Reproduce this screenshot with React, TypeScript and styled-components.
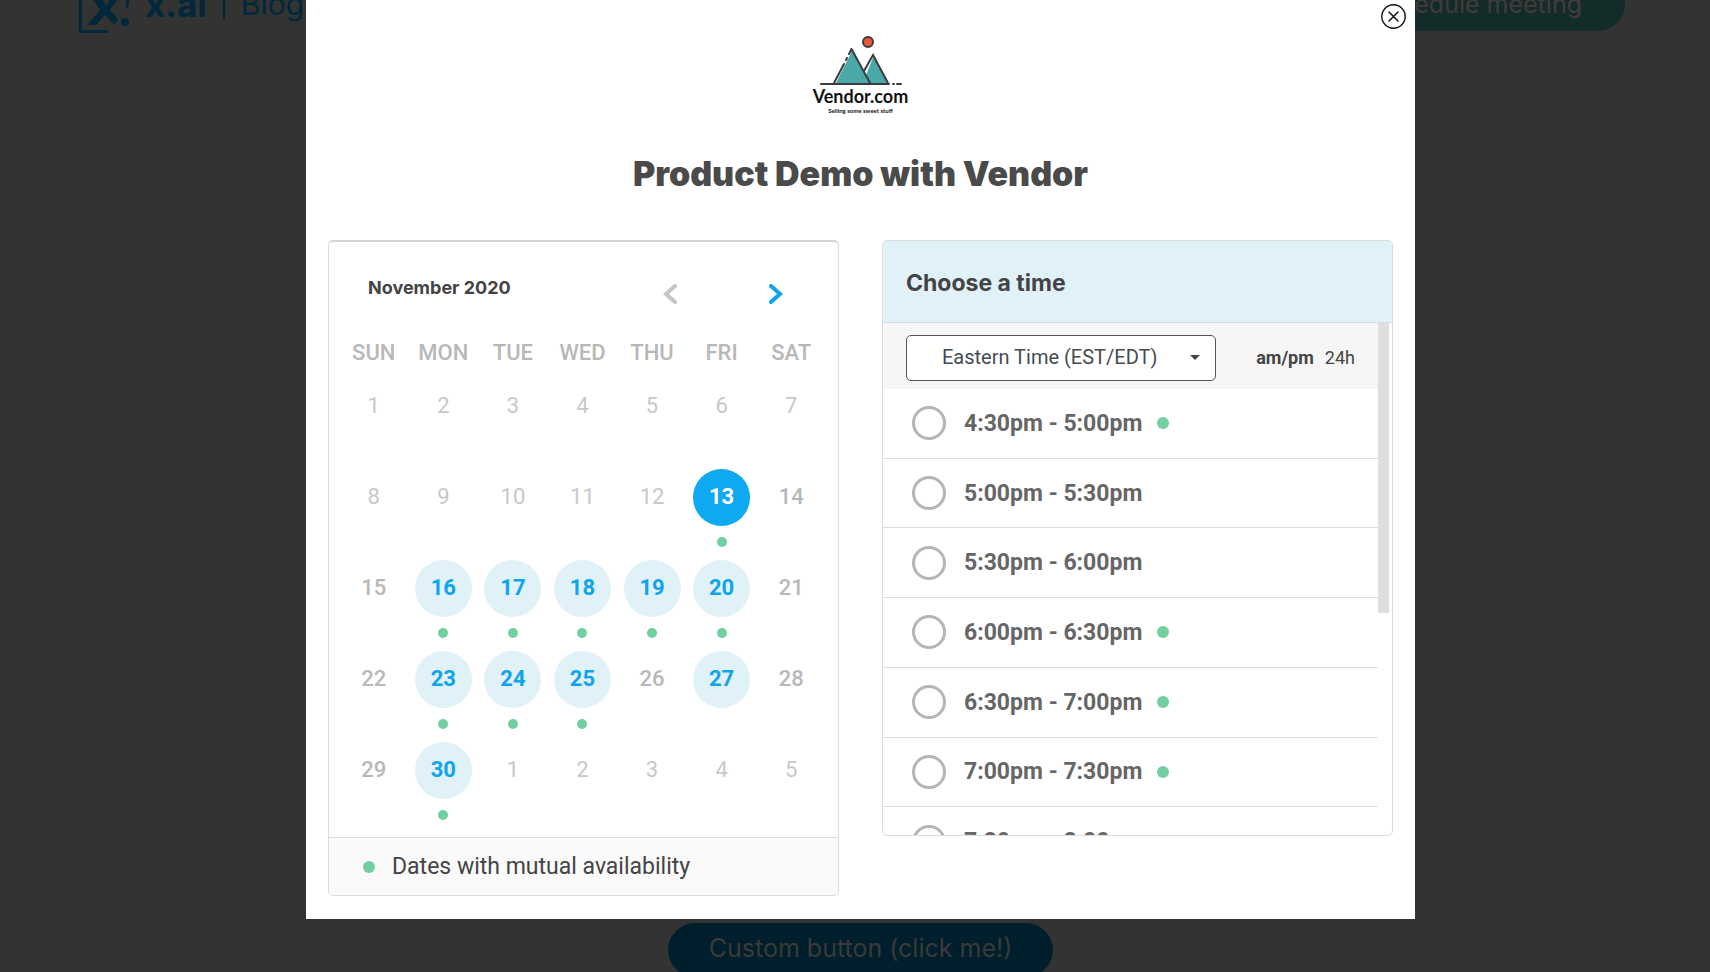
import React, { useState } from "react";
import styled, { createGlobalStyle, css } from "styled-components";

const inter = `Inter, "Liberation Sans", sans-serif`;
const roboto = `Roboto, "Liberation Sans", sans-serif`;

const GlobalStyle = createGlobalStyle`
  *, *::before, *::after { box-sizing: border-box; }
  body { margin: 0; background: #333; overflow: hidden; font-family: ${roboto}; }
  button { font: inherit; border: 0; padding: 0; background: none; cursor: pointer; }
`;

/* Dimmed page behind the dialog */
const Page = styled.div`
  display: flex;
  flex-direction: column;
  height: 100vh;
  overflow: hidden;
  padding-left: 11px;
`;
const SiteHeader = styled.header`
  display: flex;
  align-items: center;
  height: 108px;
  flex: none;
  margin-top: -50px;
  padding: 0 85px 0 68px;
  font-family: ${inter};
  color: #00283a;
`;
const Brand = styled.a`
  display: flex;
  align-items: center;
  gap: 14px;
  color: inherit;
  text-decoration: none;
  font-size: 35px;
  font-weight: 700;
`;
const HeaderLink = styled.a`
  margin-left: 16px;
  padding-left: 16px;
  border-left: 2px solid #00283a;
  color: inherit;
  text-decoration: none;
  font-size: 30px;
  line-height: 32px;
`;
const PillButton = styled.button<{ $tone: "teal" | "blue" }>`
  height: 54px;
  flex: none;
  border-radius: 27px;
  font-family: ${inter};
  font-size: 25px;
  white-space: nowrap;
  ${(p) =>
    p.$tone === "teal"
      ? css`background: #132b29; color: #433b3b; margin-left: auto; padding: 0 43px;`
      : css`background: #001f2d; color: #3d3937; margin: auto auto -5px; padding: 0 41px 4px;`}
`;

/* Dialog */
const Backdrop = styled.div`
  position: fixed;
  inset: 0;
  display: flex;
  justify-content: center;
  align-items: flex-start;
  padding-left: 11px;
`;
const Dialog = styled.section`
  position: relative;
  width: 100%;
  max-width: 1109px;
  padding: 35px 22px 23px;
  background: #fff;
`;
const CloseButton = styled.button`
  position: absolute;
  top: 4px;
  right: 9px;
  width: 25px;
  height: 25px;
  svg { display: block; }
`;
const VendorLogo = styled.div`
  display: flex;
  flex-direction: column;
  align-items: center;
  gap: 1px;
  color: #111;
  font-family: Lato, "Liberation Sans", sans-serif;
  font-weight: 700;
`;
const VendorName = styled.span`
  font-size: 18px;
  line-height: 20px;
`;
const VendorTagline = styled.span`
  font-size: 6px;
  line-height: 8px;
`;
const Title = styled.h1`
  margin: 35px 0 42px;
  color: #4a4a4a;
  font-family: ${inter};
  font-size: 34px;
  font-weight: 900;
  line-height: 48px;
  text-align: center;
`;
const Columns = styled.div`
  display: grid;
  grid-template-columns: 1fr 1fr;
  gap: 43px;
  align-items: start;
`;
const Card = styled.section`
  border: 1px solid #dcdcdc;
  border-radius: 5px;
  overflow: hidden;
`;

/* Calendar */
const CalendarCard = styled(Card)`
  border-top: 2px solid #d4d4d4;
`;
const MonthBar = styled.header`
  display: flex;
  align-items: center;
  height: 86px;
  padding: 17px 44px 0 39px;
`;
const Month = styled.h2`
  flex: 1;
  margin: 0;
  padding-bottom: 13px;
  color: #444;
  font-family: ${inter};
  font-size: 18px;
  font-weight: 700;
`;
const MonthButton = styled.button<{ $active?: boolean }>`
  display: grid;
  place-items: center;
  width: 36px;
  height: 36px;
  color: ${(p) => (p.$active ? "#0ea5ee" : "#c3c5c8")};
  & + & { margin-left: 70px; }
`;
const Days = styled.table`
  width: calc(100% - 22px);
  margin: 0 12px 4px 10px;
  table-layout: fixed;
  border-collapse: collapse;
`;
const Weekday = styled.th`
  height: 50px;
  padding: 0;
  color: #b8b8b8;
  font-size: 22px;
  font-weight: 500;
  line-height: 26px;
`;
const DayCell = styled.td`
  height: 91px;
  padding: 0;
  vertical-align: top;
`;
type Kind = "faint" | "plain" | "open" | "selected";
const kinds = {
  faint: css`color: #c8c8c8; font-weight: 400;`,
  plain: css`color: #b8b8b8; font-weight: 500;`,
  open: css`color: #0ea5ee; font-weight: 700; background: #e1f1f8;`,
  selected: css`color: #fff; font-weight: 700; background: #0ea9f0;`,
};
const Day = styled.button<{ $kind: Kind }>`
  display: block;
  width: 57px;
  height: 57px;
  margin: 0 auto 11px;
  padding-bottom: 2px;
  border-radius: 50%;
  font-size: 22px;
  ${(p) => kinds[p.$kind]}
`;
const Dot = styled.span<{ $size: number }>`
  display: block;
  flex: none;
  width: ${(p) => p.$size}px;
  height: ${(p) => p.$size}px;
  border-radius: 50%;
  background: #72cf9f;
`;
const DotSlot = styled.span`
  display: flex;
  justify-content: center;
`;
const Legend = styled.footer`
  display: flex;
  align-items: center;
  gap: 17px;
  height: 58px;
  padding-left: 34px;
  border-top: 1px solid #dcdcdc;
  background: #fafafa;
  color: #444;
  font-size: 23px;
`;

/* Time list */
const TimeCard = styled(Card)`
  display: flex;
  flex-direction: column;
  height: 596px;
`;
const TimeHeading = styled.h2`
  flex: none;
  display: flex;
  align-items: center;
  margin: 0;
  padding: 2px 23px 0;
  height: 82px;
  border-bottom: 1px solid #dcdcdc;
  background: #e1f1f8;
  color: #444;
  font-family: ${inter};
  font-size: 23px;
  font-weight: 700;
`;
const TimeBody = styled.div`
  display: flex;
  flex: 1;
  min-height: 0;
`;
const TimeColumn = styled.div`
  flex: 1;
`;
const ScrollThumb = styled.div`
  width: 11px;
  height: 290px;
  margin-right: 3px;
  background: #dedede;
`;
const ZoneBar = styled.div`
  display: flex;
  align-items: center;
  height: 66px;
  padding: 3px 23px 0;
  background: #f6f6f6;
`;
const ZonePicker = styled.label`
  position: relative;
  flex: none;
  &::after {
    content: "";
    position: absolute;
    top: 20px;
    right: 16px;
    border: 5px solid transparent;
    border-top-color: #444;
    border-bottom: 0;
    pointer-events: none;
  }
`;
const ZoneSelect = styled.select`
  appearance: none;
  display: block;
  width: 310px;
  height: 46px;
  padding: 0 30px 2px 35px;
  border: 1px solid #555;
  border-radius: 5px;
  background: #fff;
  color: #454b52;
  font-family: ${roboto};
  font-size: 20px;
`;
const Formats = styled.div`
  display: flex;
  gap: 11px;
  margin-left: auto;
`;
const FormatButton = styled.button<{ $on: boolean }>`
  color: #444;
  font-size: 18px;
  font-weight: ${(p) => (p.$on ? 700 : 400)};
`;
const Slots = styled.ul`
  display: grid;
  grid-auto-rows: 1fr;
  height: 488px;
  margin: 0;
  padding: 0;
  list-style: none;
`;
const Slot = styled.li`
  display: grid;
  border-bottom: 1px solid #dcdcdc;
`;
const SlotLabel = styled.label`
  display: flex;
  align-items: center;
  padding-left: 29px;
  color: #666;
  font-size: 23px;
  font-weight: 700;
`;
const Radio = styled.input`
  appearance: none;
  width: 34px;
  height: 34px;
  margin: 0 18px 0 0;
  border: 3px solid #b5b5b5;
  border-radius: 50%;
  &:checked { background: #0ea5ee; box-shadow: inset 0 0 0 5px #fff; }
`;
const SlotText = styled.span`
  margin-right: 15px;
`;

const weekdays = ["SUN", "MON", "TUE", "WED", "THU", "FRI", "SAT"];
const open = [16, 17, 18, 19, 20, 23, 24, 25, 27, 30];
const mutual = [13, 16, 17, 18, 19, 20, 23, 24, 25, 30];
const weeks = [0, 1, 2, 3, 4].map((w) => weekdays.map((_, d) => w * 7 + d + 1));
const slots = [
  { text: "4:30pm - 5:00pm", mutual: true },
  { text: "5:00pm - 5:30pm", mutual: false },
  { text: "5:30pm - 6:00pm", mutual: false },
  { text: "6:00pm - 6:30pm", mutual: true },
  { text: "6:30pm - 7:00pm", mutual: true },
  { text: "7:00pm - 7:30pm", mutual: true },
  { text: "7:30pm - 8:00pm", mutual: false },
];

function BrandMark() {
  return (
    <svg width="52" height="58" viewBox="0 0 52 58" fill="none" aria-hidden="true">
      <path d="M1.500 4v52.500H29" stroke="#00283a" strokeWidth="3" />
      <path d="M10 18H20L27 31L35 18H43L31 35L39 44L36 50L26 40L17 50H8L21 35Z" fill="#00283a" />
      <circle cx="46" cy="47" r="4" fill="#00283a" />
      <path d="M47 22h3v8l-3 4z" fill="#00283a" />
    </svg>
  );
}

function Mountains() {
  return (
    <svg width="82" height="50" viewBox="0 0 82 50" fill="none" aria-hidden="true">
      <path d="M43 48L54 20L68 48Z" fill="#4aa9a8" />
      <path d="M44 36L53 20L68 48" stroke="#3c3c3e" strokeWidth="2" />
      <path d="M16 48L32.500 15L50 48Z" fill="#4aa9a8" />
      <path d="M31.500 14L50 48M31.500 14L29 19M27 23L26 25M24 29L14 48" stroke="#3c3c3e" strokeWidth="2" strokeLinecap="round" />
      <path d="M1 49H69M73 49h1M77 49h4" stroke="#3c3c3e" strokeWidth="2" strokeLinecap="round" />
      <circle cx="48" cy="7" r="5" fill="#ee5436" stroke="#3c3c3e" strokeWidth="2" />
    </svg>
  );
}

function Chevron({ back }: { back?: boolean }) {
  return (
    <svg width="14" height="20" viewBox="0 0 14 20" fill="none" aria-hidden="true">
      <path
        d={back ? "M12 2L3 10L12 18" : "M2 2L11 10L2 18"}
        stroke="currentColor"
        strokeWidth="4"
        strokeLinecap="round"
      />
    </svg>
  );
}

export default function App() {
  const [selected, setSelected] = useState(13);
  const [format, setFormat] = useState("am/pm");

  const kindOf = (n: number): Kind =>
    n === selected ? "selected" : n > 30 || n < 13 ? "faint" : open.includes(n) ? "open" : "plain";

  return (
    <>
      <GlobalStyle />
      <Page>
        <SiteHeader>
          <Brand href="#home"><BrandMark />x.ai</Brand>
          <HeaderLink href="#blog">Blog</HeaderLink>
          <PillButton $tone="teal">Schedule meeting</PillButton>
        </SiteHeader>
        <PillButton $tone="blue">Custom button (click me!)</PillButton>
      </Page>
      <Backdrop>
        <Dialog role="dialog" aria-labelledby="dialog-title">
          <CloseButton aria-label="Close">
            <svg width="25" height="25" viewBox="0 0 25 25" fill="none" stroke="#111" strokeLinecap="round">
              <circle cx="12.500" cy="12.500" r="11.700" strokeWidth="1.400" />
              <path d="M8 8L17 17M17 8L8 17" strokeWidth="1.500" />
            </svg>
          </CloseButton>
          <VendorLogo>
            <Mountains />
            <VendorName>Vendor.com</VendorName>
            <VendorTagline>Selling some sweet stuff</VendorTagline>
          </VendorLogo>
          <Title id="dialog-title">Product Demo with Vendor</Title>
          <Columns>
            <CalendarCard aria-label="Choose a date">
              <MonthBar>
                <Month>November 2020</Month>
                <MonthButton aria-label="Previous month"><Chevron back /></MonthButton>
                <MonthButton $active aria-label="Next month"><Chevron /></MonthButton>
              </MonthBar>
              <Days>
                <thead>
                  <tr>{weekdays.map((d) => <Weekday key={d} scope="col">{d}</Weekday>)}</tr>
                </thead>
                <tbody>
                  {weeks.map((week) => (
                    <tr key={week[0]}>
                      {week.map((n) => (
                        <DayCell key={n}>
                          <Day $kind={kindOf(n)} onClick={() => open.includes(n) && setSelected(n)}>
                            {n > 30 ? n - 30 : n}
                          </Day>
                          {mutual.includes(n) && <DotSlot><Dot $size={10} /></DotSlot>}
                        </DayCell>
                      ))}
                    </tr>
                  ))}
                </tbody>
              </Days>
              <Legend><Dot $size={12} />Dates with mutual availability</Legend>
            </CalendarCard>
            <TimeCard>
              <TimeHeading>Choose a time</TimeHeading>
              <TimeBody>
                <TimeColumn>
                  <ZoneBar>
                    <ZonePicker>
                      <ZoneSelect aria-label="Time zone">
                        <option>Eastern Time (EST/EDT)</option>
                      </ZoneSelect>
                    </ZonePicker>
                    <Formats>
                      {["am/pm", "24h"].map((f) => (
                        <FormatButton key={f} $on={f === format} onClick={() => setFormat(f)}>{f}</FormatButton>
                      ))}
                    </Formats>
                  </ZoneBar>
                  <Slots>
                    {slots.map((s) => (
                      <Slot key={s.text}>
                        <SlotLabel>
                          <Radio type="radio" name="slot" />
                          <SlotText>{s.text}</SlotText>
                          {s.mutual && <Dot $size={12} />}
                        </SlotLabel>
                      </Slot>
                    ))}
                  </Slots>
                </TimeColumn>
                <ScrollThumb />
              </TimeBody>
            </TimeCard>
          </Columns>
        </Dialog>
      </Backdrop>
    </>
  );
}
